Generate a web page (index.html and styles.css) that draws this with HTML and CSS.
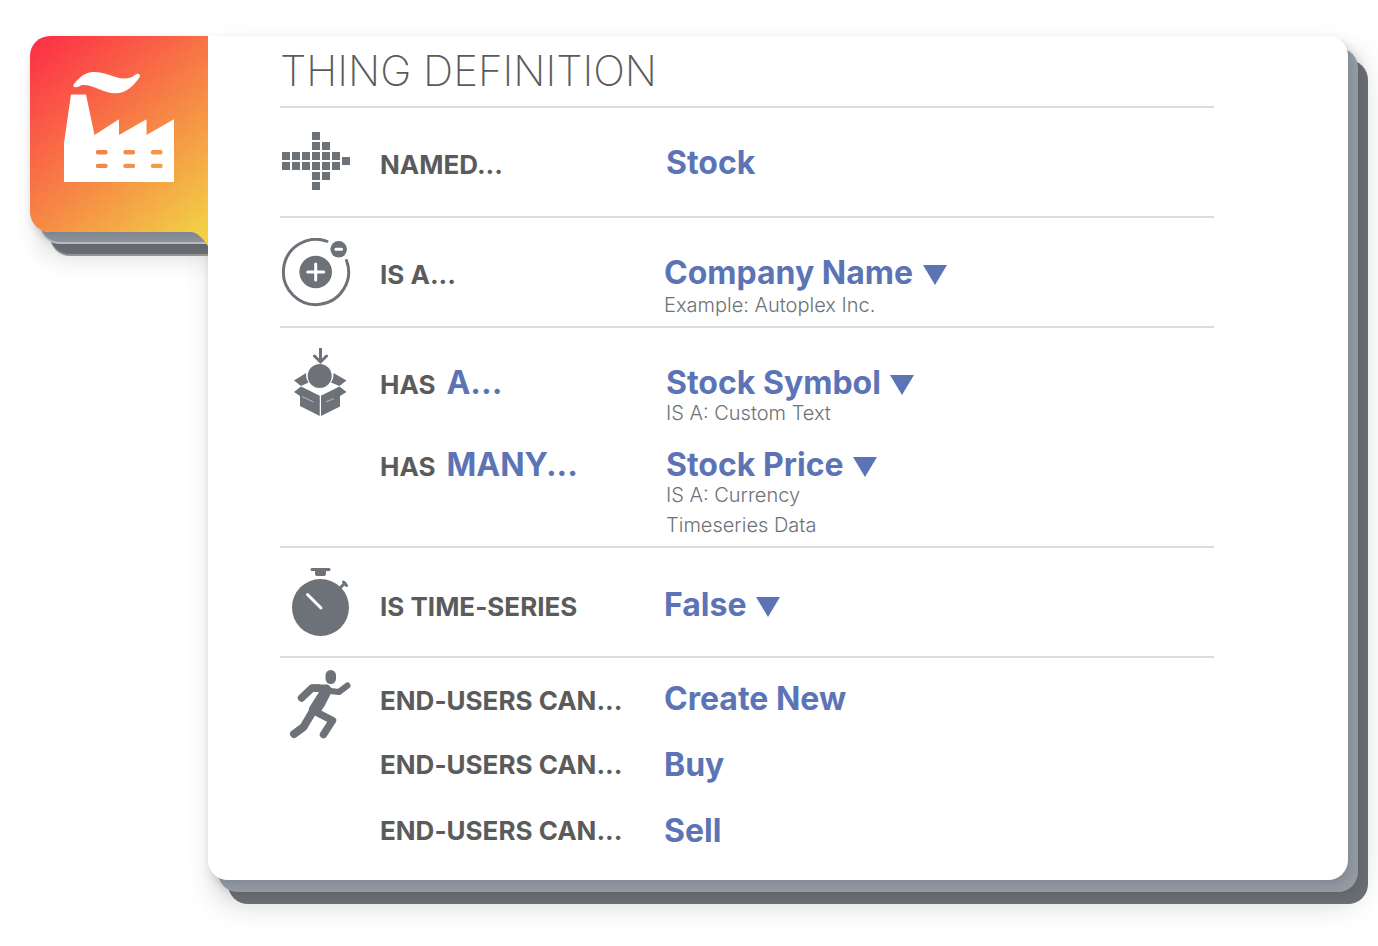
FILE: index.html
```html
<!DOCTYPE html>
<html lang="en">
<head>
<meta charset="utf-8">
<title>Thing Definition</title>
<link rel="stylesheet" href="styles.css">
</head>
<body>
<main class="page">
  <div class="tab">
    <svg class="tab-icon" viewBox="0 0 110 110" aria-hidden="true">
      <path fill="#fff" d="M10 12C18 2 24 0 30 0C42 0 52 7 61 6.600C67 6 70 4 72 2.200C74.500 .500 77 3 75.500 5.200C70 13 63 21.300 51 21.300C40 21.300 30 12.800 19 13C16.500 13 14.500 15.300 12 15.300C9.500 15.300 8.500 13.500 10 12Z"/>
      <path fill="#fff" fill-rule="evenodd" d="M7 22.500H22L30.500 63L55 47.300V63L82.500 47.300V63L110 47.300V110H0V71ZM34 78a2.200 2.200 0 0 0 0 4.400h7.500a2.200 2.200 0 0 0 0-4.400ZM61.500 78a2.200 2.200 0 0 0 0 4.400h7.500a2.200 2.200 0 0 0 0-4.400ZM89 78a2.200 2.200 0 0 0 0 4.400h7.500a2.200 2.200 0 0 0 0-4.400ZM34 91.700a2.200 2.200 0 0 0 0 4.400h7.500a2.200 2.200 0 0 0 0-4.400ZM61.500 91.700a2.200 2.200 0 0 0 0 4.400h7.500a2.200 2.200 0 0 0 0-4.400ZM89 91.700a2.200 2.200 0 0 0 0 4.400h7.500a2.200 2.200 0 0 0 0-4.400Z"/>
    </svg>
  </div>
  <section class="card">
    <h1 class="title">THING DEFINITION</h1>

    <div class="row">
      <svg class="icon" viewBox="0 0 72 72" aria-hidden="true">
        <path d="M32 4h8v8h-8zM32 14h8v8h-8zM42 14h8v8h-8zM2 24h8v8H2zM12 24h8v8h-8zM22 24h8v8h-8zM32 24h8v8h-8zM42 24h8v8h-8zM52 24h8v8h-8zM2 34h8v8H2zM12 34h8v8h-8zM22 34h8v8h-8zM32 34h8v8h-8zM42 34h8v8h-8zM52 34h8v8h-8zM62 29h8v8h-8zM32 44h8v8h-8zM42 44h8v8h-8zM32 54h8v8h-8z"/>
      </svg>
      <div class="entries">
        <div class="entry">
          <label class="label" for="thing-name">NAMED...</label>
          <div class="detail detail-inset"><input class="value value-input" id="thing-name" type="text" value="Stock"></div>
        </div>
      </div>
    </div>

    <div class="row">
      <svg class="icon" viewBox="0 0 72 72" aria-hidden="true">
        <path class="stroke" d="M47 3.300A32.600 32.600 0 1 0 66.500 22.500"/>
        <circle cx="35.700" cy="34" r="16.300"/>
        <path class="cut" d="M35.700 26v16M27.700 34h16"/>
        <circle cx="58.700" cy="11.300" r="8.300"/>
        <path class="cut" d="M56 11.300h5.500"/>
      </svg>
      <div class="entries">
        <div class="entry">
          <label class="label" for="thing-type">IS A...</label>
          <div class="detail">
            <span class="dropdown"><select class="value" id="thing-type"><option>Company Name</option></select></span>
            <p class="note note-spaced">Example: Autoplex Inc.</p>
          </div>
        </div>
      </div>
    </div>

    <div class="row">
      <svg class="icon" viewBox="0 0 72 72" aria-hidden="true">
        <path class="stroke" d="M40.500 0V13M34.500 8L40.500 14L46.500 8"/>
        <circle cx="39.700" cy="28" r="12"/>
        <path d="M26 25L14 32.500L21 38L28.500 34.500Q25.500 30 26 25ZM53.500 25L66.500 32.500L59.500 38L51 34.500Q54 30 53.500 25Z"/>
        <path d="M21 38.500L40.300 48L59.500 38.500L66.500 44L60 48V58.500L41 68V48H39.800V68L20 58V48L14 44Z"/>
        <path class="crease" d="M40.400 48V68M22 48.500L33.500 54M46 54L54 50.500"/>
      </svg>
      <div class="entries entries-has">
        <div class="entry">
          <div class="label"><label for="has-one">HAS</label><button class="value mode" type="button">A...</button></div>
          <div class="detail detail-inset">
            <span class="dropdown"><select class="value" id="has-one"><option>Stock Symbol</option></select></span>
            <p class="note">IS A: Custom Text</p>
          </div>
        </div>
        <div class="entry">
          <div class="label"><label for="has-many">HAS</label><button class="value mode" type="button">MANY...</button></div>
          <div class="detail detail-inset">
            <span class="dropdown"><select class="value" id="has-many"><option>Stock Price</option></select></span>
            <p class="note">IS A: Currency</p>
            <p class="note note-next">Timeseries Data</p>
          </div>
        </div>
      </div>
    </div>

    <div class="row">
      <svg class="icon" viewBox="0 0 72 72" aria-hidden="true">
        <rect x="30.500" y="0" width="20" height="3" rx="1.500"/>
        <path d="M35 2h11v4q0 2-2 2h-7q-2 0-2-2z"/>
        <circle cx="40.500" cy="39.500" r="28.500"/>
        <path class="stroke" d="M60 20L65 15M63.500 14L66.500 17.500"/>
        <path class="cut" d="M27.500 26.500L41 40"/>
      </svg>
      <div class="entries entries-series">
        <div class="entry">
          <label class="label" for="time-series">IS TIME-SERIES</label>
          <div class="detail"><span class="dropdown"><select class="value" id="time-series"><option>False</option></select></span></div>
        </div>
      </div>
    </div>

    <div class="row row-actions">
      <svg class="icon" viewBox="0 0 72 72" aria-hidden="true">
        <rect x="45.500" y="0" width="10.500" height="14" rx="5.200"/>
        <path d="M31.500 14.500H48L53 19.500L44.500 36L40.500 42L28.500 40L29.500 37L39 22L34 22Z"/>
        <path class="limb" d="M46 20.500L59 22L67.500 15.500" stroke-width="6"/>
        <path class="limb" d="M38 18H32L21.500 28" stroke-width="7.500"/>
        <path class="limb" d="M34 41L52.500 50.500L43.500 64.500" stroke-width="7.500"/>
        <path class="limb" d="M33 41L23.500 57L14 64" stroke-width="8"/>
      </svg>
      <div class="entries entries-actions">
        <div class="entry"><span class="label">END-USERS CAN...</span><div class="detail"><button class="value" type="button">Create New</button></div></div>
        <div class="entry entry-more"><span class="label">END-USERS CAN...</span><div class="detail"><button class="value" type="button">Buy</button></div></div>
        <div class="entry entry-more"><span class="label">END-USERS CAN...</span><div class="detail"><button class="value" type="button">Sell</button></div></div>
      </div>
    </div>
  </section>
</main>
</body>
</html>
```
FILE: styles.css
```css
* { box-sizing: border-box; }

body {
  margin: 0;
  background: #fff;
  color: #5b5b5b;
  font-family: Inter, "Liberation Sans", sans-serif;
}

.page {
  display: flex;
  align-items: flex-start;
  padding: 36px 30px 66px;
}

.tab {
  position: relative;
  z-index: 1;
  flex: none;
  padding: 36px 34px 50px;
  border-radius: 20px 0 0 20px;
  background: linear-gradient(140deg, #fd2b47, #f68945 57%, #f2d245);
  box-shadow:
    2px 4px 10px rgba(0, 0, 0, .12),
    10px 10px 0 #8c949e,
    10px 12px 0 #bcbdc1,
    10px 10px 12px rgba(0, 0, 0, .12),
    20px 22px 0 #686c71,
    20px 24px 0 #939393,
    12px 22px 28px rgba(0, 0, 0, .18);
  clip-path: inset(-60px 0 -80px -60px);
}

.tab::after {
  content: "";
  position: absolute;
  right: 0;
  top: 100%;
  width: 18px;
  height: 14px;
  background: #f2cf45;
  clip-path: path("M0 0C8 0 13 7 18 14V0Z");
}

.tab-icon {
  display: block;
  width: 110px;
  height: 110px;
}

.card {
  flex: 1;
  min-width: 0;
  padding: 0 134px 29px 72px;
  border-radius: 0 20px 20px 20px;
  background: #fff;
  box-shadow:
    2px 4px 10px rgba(0, 0, 0, .12),
    10px 12px 0 #929aa4,
    12px 14px 12px rgba(0, 0, 0, .12),
    20px 24px 0 #6a6e73,
    10px 20px 32px rgba(0, 0, 0, .22);
}

.title {
  margin: 0;
  font-size: 42px;
  font-weight: 200;
  line-height: 70px;
  border-bottom: 2px solid #dcdcdc;
}

.row {
  display: grid;
  grid-template-columns: 100px 1fr;
  align-items: start;
  border-bottom: 2px solid #dcdcdc;
}

.row-actions { border-bottom: 0; }

.icon {
  width: 72px;
  height: 72px;
  margin-top: 20px;
  fill: #6c7278;
}

.row-actions .icon { margin-top: 12px; }

.icon .stroke {
  fill: none;
  stroke: #6c7278;
  stroke-width: 3;
  stroke-linecap: round;
}

.icon .limb {
  fill: none;
  stroke: #6c7278;
  stroke-linecap: round;
  stroke-linejoin: round;
}

.icon .cut {
  fill: none;
  stroke: #fff;
  stroke-width: 3;
  stroke-linecap: round;
}

.icon .crease {
  fill: none;
  stroke: #fff;
  stroke-width: 1;
  opacity: .5;
}

.entries {
  display: grid;
  min-height: 108px;
  padding: 37px 0 8px;
  align-content: start;
}

.entries-has { row-gap: 22px; padding-bottom: 9px; }
.entries-series { padding-top: 39px; }
.entries-actions { row-gap: 28px; padding: 23px 0 0; }

.entry {
  display: grid;
  grid-template-columns: 284px 1fr;
  align-items: baseline;
}

.entry-more {
  align-items: start;
  min-height: 38px;
}

.label {
  display: flex;
  align-items: baseline;
  gap: 11px;
  font-size: 26px;
  font-weight: 700;
  line-height: 36px;
  font-variant-ligatures: none;
}

.detail-inset { padding-left: 2px; }

.value {
  display: block;
  height: 36px;
  margin: 0;
  padding: 0;
  border: 0;
  background: none;
  color: #5c74b5;
  font-family: inherit;
  font-size: 32px;
  font-weight: 700;
  line-height: 36px;
  font-variant-ligatures: none;
  appearance: none;
}

.value-input { width: 100%; }

.dropdown {
  position: relative;
  display: table;
}

.dropdown .value { padding-right: 33px; }

.dropdown::after {
  content: "";
  position: absolute;
  right: 0;
  top: 10px;
  width: 24px;
  height: 20px;
  background: #5c74b5;
  clip-path: polygon(0 0, 100% 0, 50% 100%);
  pointer-events: none;
}

.note {
  margin: 0;
  color: #6c7278;
  font-size: 20px;
  font-weight: 300;
  line-height: 24px;
}

.note-spaced { margin-top: 2px; }
.note-next { margin-top: 6px; }
```
